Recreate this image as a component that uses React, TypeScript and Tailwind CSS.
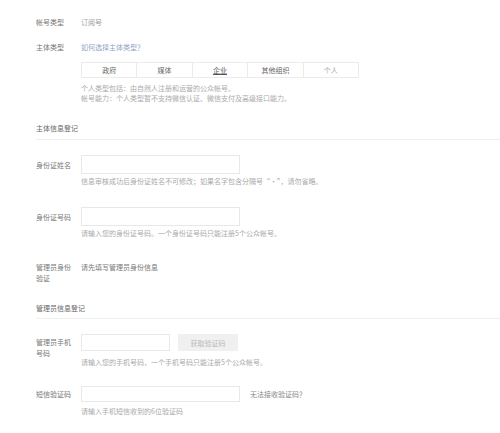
import React from "react";

const font = { fontFamily: '"Noto Sans CJK SC", "Noto Sans", sans-serif' };

function Label({ children, className = "" }: { children: React.ReactNode; className?: string }) {
  return <div className={`w-[45px] shrink-0 text-[#777] ${className}`}>{children}</div>;
}

export default function App() {
  return (
    <div style={font} className="w-[500px] h-[433px] bg-white text-[7px] leading-[10px] overflow-hidden">
      <div className="pl-[36px] pt-[17px]">
        {/* 帐号类型 */}
        <div className="flex h-[10px] items-center">
          <Label>帐号类型</Label>
          <div className="text-[#999]">订阅号</div>
        </div>
        {/* 主体类型 */}
        <div className="flex mt-[15px]">
          <Label>主体类型</Label>
          <div>
            <div className="text-[#8fa5c4] h-[10px]">如何选择主体类型？</div>
            <div className="mt-[10px] flex w-[278px] h-[16px] border border-[#ebebeb] text-[#666]">
              <div className="flex-1 flex items-center justify-center border-r border-[#ebebeb]">政府</div>
              <div className="flex-1 flex items-center justify-center border-r border-[#ebebeb]">媒体</div>
              <div className="flex-1 flex items-center justify-center border-r border-[#ebebeb]">
                <span className="underline underline-offset-1 text-[#555]">企业</span>
              </div>
              <div className="flex-1 flex items-center justify-center border-r border-[#ebebeb]">其他组织</div>
              <div className="flex-1 flex items-center justify-center text-[#aaa]">个人</div>
            </div>
            <div className="mt-[5px] text-[#aaa]">
              <div>个人类型包括：由自然人注册和运营的公众帐号。</div>
              <div>帐号能力：个人类型暂不支持微信认证、微信支付及高级接口能力。</div>
            </div>
          </div>
        </div>

        {/* 主体信息登记 */}
        <div className="mt-[20px] pb-[6px] border-b border-[#efefef] text-[#666]">主体信息登记</div>

        {/* 身份证姓名 */}
        <div className="flex mt-[15px]">
          <Label className="h-[19px] flex items-center">身份证姓名</Label>
          <div>
            <div className="w-[159px] h-[19px] border border-[#e8e8e8]" />
            <div className="mt-[2px] text-[#aaa]">信息审核成功后身份证姓名不可修改；如果名字包含分隔号“·”，请勿省略。</div>
          </div>
        </div>

        {/* 身份证号码 */}
        <div className="flex mt-[21px]">
          <Label className="h-[19px] flex items-center">身份证号码</Label>
          <div>
            <div className="w-[159px] h-[19px] border border-[#e8e8e8]" />
            <div className="mt-[2px] text-[#aaa]">请输入您的身份证号码。一个身份证号码只能注册5个公众帐号。</div>
          </div>
        </div>

        {/* 管理员身份验证 */}
        <div className="flex mt-[24px] leading-[11px]">
          <Label>管理员身份<br />验证</Label>
          <div className="text-[#777]">请先填写管理员身份信息</div>
        </div>

        {/* 管理员信息登记 */}
        <div className="mt-[19px] pb-[5px] border-b border-[#efefef] text-[#666]">管理员信息登记</div>

        {/* 管理员手机号码 */}
        <div className="flex mt-[15px]">
          <Label className="pt-[3px] leading-[11px]">管理员手机<br />号码</Label>
          <div>
            <div className="flex items-center">
              <div className="w-[89px] h-[17px] border border-[#e8e8e8]" />
              <div className="ml-[8px] w-[60px] h-[17px] bg-[#f0f0f0] text-[#bbb] flex items-center justify-center">获取验证码</div>
            </div>
            <div className="mt-[6px] text-[#aaa]">请输入您的手机号码，一个手机号码只能注册5个公众帐号。</div>
          </div>
        </div>

        {/* 短信验证码 */}
        <div className="flex mt-[19px]">
          <Label className="h-[16px] flex items-center">短信验证码</Label>
          <div>
            <div className="flex items-center">
              <div className="w-[159px] h-[16px] border border-[#e8e8e8]" />
              <div className="ml-[10px] text-[#888]">无法接收验证码？</div>
            </div>
            <div className="mt-[4px] text-[#aaa]">请输入手机短信收到的6位验证码</div>
          </div>
        </div>
      </div>
    </div>
  );
}
